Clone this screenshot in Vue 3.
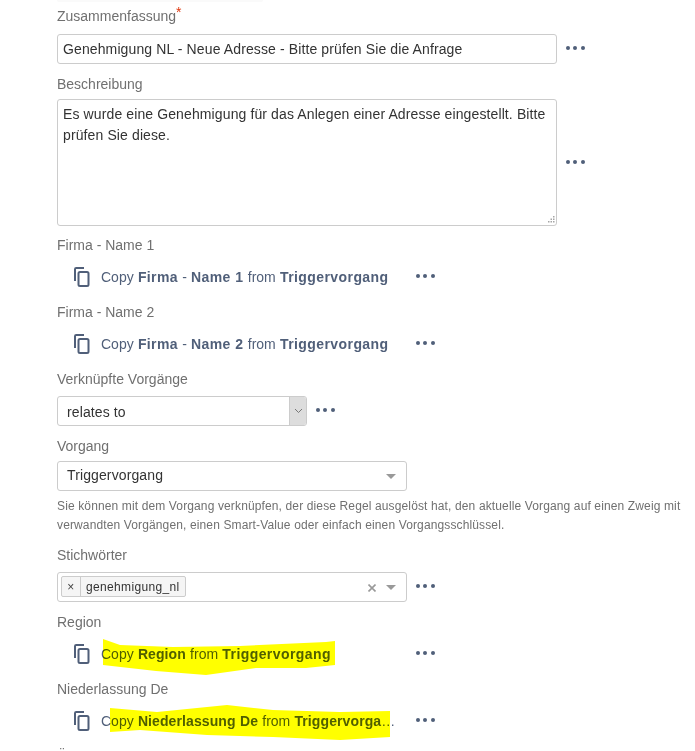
<template>
  <main class="page">
    <div class="top-edge"></div>

    <!-- Zusammenfassung -->
    <section class="field first">
      <label class="lbl">Zusammenfassung<span class="req">*</span></label>
      <div class="row">
        <div class="box input">Genehmigung NL - Neue Adresse - Bitte prüfen Sie die Anfrage</div>
        <span class="dots"><i></i><i></i><i></i></span>
      </div>
    </section>

    <!-- Beschreibung -->
    <section class="field">
      <label class="lbl">Beschreibung</label>
      <div class="row tight">
        <div class="box area">
          Es wurde eine Genehmigung für das Anlegen einer Adresse eingestellt. Bitte prüfen Sie diese.
          <svg class="grip" width="9" height="9" viewBox="0 0 9 9">
            <path d="M7 1h1.500v1.500H7zM4.500 3.500H6V5H4.500zM7 3.500h1.500V5H7zM2 6h1.500v1.500H2zM4.500 6H6v1.500H4.500zM7 6h1.500v1.500H7z" fill="#a5a5a5" />
          </svg>
        </div>
        <span class="dots"><i></i><i></i><i></i></span>
      </div>
    </section>

    <section v-for="(c, i) in firstCopies" :key="c.num" class="field" :class="{'after-area': i === 0}">
      <label class="lbl">Firma - {{ c.num }}</label>
      <div class="copy-row">
        <svg class="copy-icon" width="16" height="20" viewBox="0 0 16 20" fill="none" stroke="#505f79" stroke-width="2">
          <path d="M1 14V2.200A1.200 1.200 0 0 1 2.200 1H10" />
          <rect x="4.500" y="5" width="10" height="14" rx="1.500" />
        </svg>
        <span class="copy-text">Copy <b>Firma</b> - <b>{{ c.num }}</b> from <b class="trig">Triggervorgang</b></span>
        <span class="dots"><i></i><i></i><i></i></span>
      </div>
    </section>

    <!-- Verknüpfte Vorgänge -->
    <section class="field">
      <label class="lbl">Verknüpfte Vorgänge</label>
      <div class="row">
        <div class="box native">
          <span class="native-val">relates to</span>
          <span class="native-btn">
            <svg width="9" height="6" viewBox="0 0 9 6" fill="none" stroke="#777" stroke-width="1">
              <path d="M1 1l3.500 3.500L8 1" />
            </svg>
          </span>
        </div>
        <span class="dots"><i></i><i></i><i></i></span>
      </div>
    </section>

    <!-- Vorgang -->
    <section class="field">
      <label class="lbl">Vorgang</label>
      <div class="box select plain">
        <span class="select-val">Triggervorgang</span>
        <span class="caret"></span>
      </div>
      <p class="help">
        Sie können mit dem Vorgang verknüpfen, der diese Regel ausgelöst hat, den aktuelle Vorgang auf einen Zweig mit verwandten Vorgängen, einen Smart-Value oder einfach einen Vorgangsschlüssel.
      </p>
    </section>

    <!-- Stichwörter -->
    <section class="field">
      <label class="lbl">Stichwörter</label>
      <div class="row">
        <div class="box select tags">
          <span class="tag"><span class="tag-x">×</span><span class="tag-val">genehmigung_nl</span></span>
          <svg class="clear" width="8" height="8" viewBox="0 0 8 8" stroke="#999" stroke-width="1.600">
            <path d="M.5.5l7 7M7.500.5l-7 7" />
          </svg>
          <span class="caret"></span>
        </div>
        <span class="dots"><i></i><i></i><i></i></span>
      </div>
    </section>

    <!-- Highlighted rows -->
    <section class="field">
      <label class="lbl">Region</label>
      <div class="copy-row">
        <svg class="copy-icon" width="16" height="20" viewBox="0 0 16 20" fill="none" stroke="#505f79" stroke-width="2">
          <path d="M1 14V2.200A1.200 1.200 0 0 1 2.200 1H10" />
          <rect x="4.500" y="5" width="10" height="14" rx="1.500" />
        </svg>
        <span class="copy-text marked">
          <svg class="marker" width="232" height="36" viewBox="0 0 232 36">
            <path d="M0 0l17 6 53 2 67-1 86-4 9-1v24l-29 3h-50l-50 7-50-4-53-6z" fill="#ffff00" />
          </svg>
          <span class="over">Copy <b>Region</b> from <b class="trig">Triggervorgang</b></span>
        </span>
        <span class="dots"><i></i><i></i><i></i></span>
      </div>
    </section>

    <section class="field">
      <label class="lbl">Niederlassung De</label>
      <div class="copy-row">
        <svg class="copy-icon" width="16" height="20" viewBox="0 0 16 20" fill="none" stroke="#505f79" stroke-width="2">
          <path d="M1 14V2.200A1.200 1.200 0 0 1 2.200 1H10" />
          <rect x="4.500" y="5" width="10" height="14" rx="1.500" />
        </svg>
        <span class="copy-text marked">
          <svg class="marker second" width="280" height="36" viewBox="0 0 280 36">
            <path d="M0 3l47 4 70-7 46 5 67 2 50-1v26l-50 3-67-3-66-2-67-5-30 2z" fill="#ffff00" />
          </svg>
          <span class="over clip">Copy <b>Niederlassung De</b> from <b class="trig">Triggervorgang</b></span>
        </span>
        <span class="dots"><i></i><i></i><i></i></span>
      </div>
    </section>

    <!-- next label, cut off by the window -->
    <section class="field">
      <label class="lbl">Ü</label>
    </section>
  </main>
</template>

<script setup>
const firstCopies = [
  {num: 'Name 1'},
  {num: 'Name 2'},
]
</script>

<style>
html, body {
  margin: 0;
  background: #fff;
  overflow: hidden;
}
</style>

<style scoped>
.page {
  width: 695px;
  height: 751px;
  overflow: hidden;
  padding-left: 57px;
  box-sizing: border-box;
  font-family: 'Liberation Sans', Arial, sans-serif;
  font-size: 14px;
  color: #333;
  position: relative;
}

.top-edge {
  position: absolute;
  left: 57px;
  top: 0;
  width: 206px;
  height: 2px;
  background: #fafafa;
  border-radius: 0 0 4px 4px;
}

.field {
  margin-top: 10px;
}

.field.first {
  margin-top: 0;
  padding-top: 6px;
}

.field.after-area {
  margin-top: 9px;
}

.lbl {
  display: block;
  height: 20px;
  line-height: 20px;
  color: #707070;
  font-size: 14px;
}

.req {
  color: #de350b;
  position: relative;
  top: -4px;
}

.row {
  display: flex;
  align-items: center;
  margin-top: 7px;
}

.first .row {
  margin-top: 8px;
}

.row.tight {
  margin-top: 5px;
}

.box {
  box-sizing: border-box;
  border: 1px solid #ccc;
  border-radius: 3px;
  background: #fff;
  color: #333;
  letter-spacing: 0.115px;
}

.input {
  width: 500px;
  height: 30px;
  line-height: 28px;
  padding: 0 5px;
}

.area {
  position: relative;
  width: 500px;
  height: 127px;
  padding: 4px 5px;
  line-height: 21px;
}

.grip {
  position: absolute;
  right: 1px;
  bottom: 1px;
}

.dots {
  display: inline-flex;
  gap: 3.300px;
  margin-left: 9px;
  margin-bottom: 2px;
  width: 19px;
}

.dots i {
  width: 4px;
  height: 4px;
  border-radius: 50%;
  background: #505f79;
}

.copy-row {
  display: flex;
  align-items: center;
  height: 30px;
  margin-top: 7px;
  padding-left: 17px;
}

.copy-icon {
  flex: none;
  margin-right: 11px;
}

.copy-text {
  width: 300px;
  line-height: 16px;
  color: #505f79;
  white-space: nowrap;
  word-spacing: 0.3px;
}

.copy-text b {
  font-weight: 700;
  letter-spacing: 0.4px;
}

.marked b {
  letter-spacing: 0.1px;
}

.copy-text b.trig {
  letter-spacing: 0.42px;
}

.copy-text .clip b.trig {
  letter-spacing: 0.1px;
}

.copy-text + .dots {
  margin-left: 15px;
}

.native {
  display: flex;
  width: 250px;
  height: 30px;
}

.native-val {
  flex: 1;
  padding-left: 9px;
  line-height: 30px;
}

.native-btn {
  display: flex;
  align-items: center;
  justify-content: center;
  width: 16px;
  background: #ddd;
  border-left: 1px solid #ccc;
  border-radius: 0 2px 2px 0;
}

.select {
  display: flex;
  align-items: center;
  width: 350px;
  height: 30px;
  padding: 0 10px 0 9px;
}

.select.plain {
  margin-top: 5px;
}

.select-val {
  flex: 1;
  margin-top: -2px;
}

.caret {
  width: 0;
  height: 0;
  border-left: 5px solid transparent;
  border-right: 5px solid transparent;
  border-top: 5px solid #999;
}

.help {
  margin: 6px 0 0;
  width: 632px;
  font-size: 12px;
  line-height: 19px;
  letter-spacing: 0.13px;
  color: #707070;
}

.tags {
  padding: 0 10px 0 3px;
}

.tag {
  flex: none;
  display: flex;
  height: 21px;
  line-height: 20px;
  box-sizing: border-box;
  border: 1px solid #ccc;
  border-radius: 2px;
  background: #f5f5f5;
  font-size: 12px;
  letter-spacing: 0.35px;
  margin: -1px auto 0 0;
}

.tag-x {
  width: 18px;
  text-align: center;
  border-right: 1px solid #ccc;
  color: #444;
}

.tag-val {
  padding: 0 5px;
}

.clear {
  flex: none;
  margin: 2px 10px 0 0;
}

.marked {
  position: relative;
}

.marker {
  position: absolute;
  left: 2px;
  top: -7px;
}

.marker.second {
  left: 9px;
  top: -8px;
}

.over {
  position: relative;
  display: inline-block;
  mix-blend-mode: multiply;
}

.clip {
  max-width: 295px;
  overflow: hidden;
  text-overflow: ellipsis;
  vertical-align: bottom;
}
</style>
